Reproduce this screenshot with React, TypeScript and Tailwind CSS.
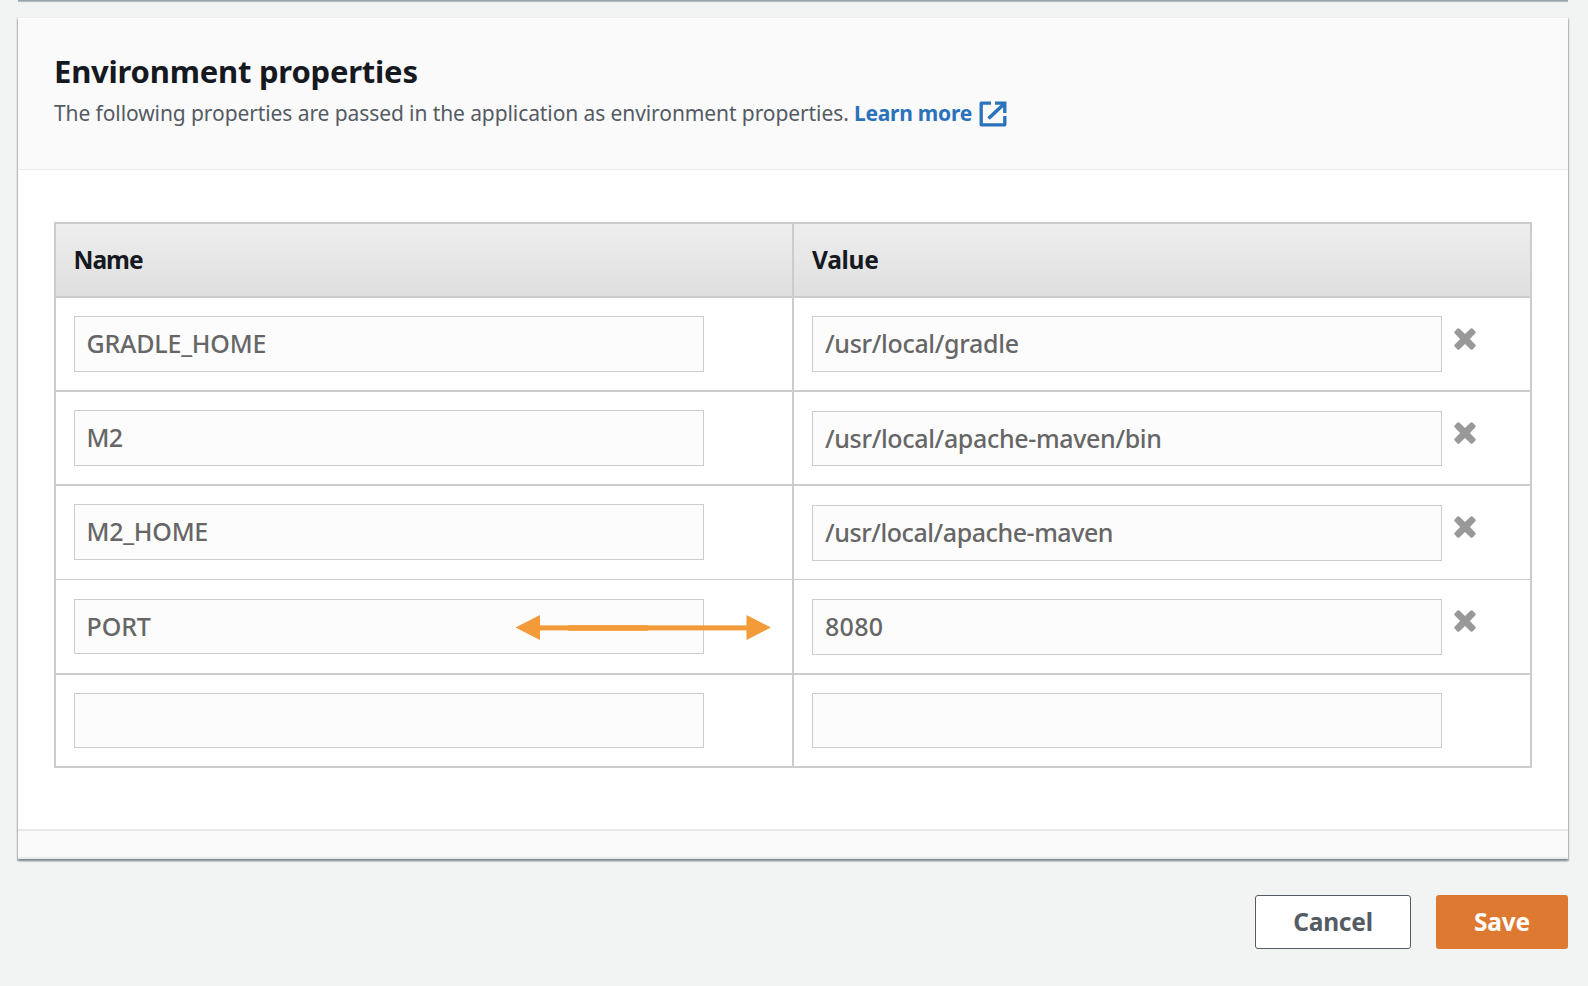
type Row = {
  name: string;
  value: string;
  removable: boolean;
  arrow?: boolean;
  rowClass: string;
  cellClass: string;
  nameClass: string;
  valueClass: string;
  buttonClass: string;
};

const rows: Row[] = [
  {
    name: "GRADLE_HOME",
    value: "/usr/local/gradle",
    removable: true,
    rowClass: "h-[94px] border-b-2",
    cellClass: "pt-[18px]",
    nameClass: "h-14 pl-[11.5px] tracking-[-0.2px]",
    valueClass: "h-14 pl-3 tracking-[-0.32px]",
    buttonClass: "mt-3",
  },
  {
    name: "M2",
    value: "/usr/local/apache-maven/bin",
    removable: true,
    rowClass: "h-[94px] border-b-2",
    cellClass: "pt-[18px]",
    nameClass: "h-14 pl-[11.5px] tracking-[-0.8px]",
    valueClass: "mt-px h-[55px] pt-px pl-3 tracking-[-0.34px]",
    buttonClass: "mt-3",
  },
  {
    name: "M2_HOME",
    value: "/usr/local/apache-maven",
    removable: true,
    rowClass: "h-[94px] border-b",
    cellClass: "pt-[18px]",
    nameClass: "h-14 pl-[11.5px] tracking-[-0.25px]",
    valueClass: "mt-px h-14 pl-3 tracking-[-0.44px]",
    buttonClass: "mt-3",
  },
  {
    name: "PORT",
    value: "8080",
    removable: true,
    arrow: true,
    rowClass: "h-[95px] border-b-2",
    cellClass: "pt-[19px]",
    nameClass: "h-[55px] pt-px pl-[11.5px] tracking-[-0.1px]",
    valueClass: "h-14 pl-3 tracking-[0.3px]",
    buttonClass: "mt-[11px]",
  },
  {
    name: "",
    value: "",
    removable: false,
    rowClass: "h-[91px]",
    cellClass: "pt-[18px]",
    nameClass: "h-[55px]",
    valueClass: "h-[55px]",
    buttonClass: "mt-3",
  },
];

function ExternalLinkIcon() {
  return (
    <svg className="mt-px h-[26px] w-[28px]" viewBox="0 0 28 26" fill="none" stroke="currentColor" strokeWidth="3.3">
      <path d="M12 2.2H2.2V23.8H25.8V15" strokeLinejoin="round" />
      <path d="M16 2.2H25.8V12" />
      <path d="M25 3L9.5 17.5" strokeWidth="3.6" />
    </svg>
  );
}

function RemoveIcon() {
  return (
    <svg className="h-[22px] w-[22px]" viewBox="0 0 22 22">
      <path
        d="M3.2 .8Q4.4 -.3 5.6 .8L11 6.1L16.4 .8Q17.6 -.3 18.8 .8L21.2 3.2Q22.3 4.4 21.2 5.6L15.9 11L21.2 16.4Q22.3 17.6 21.2 18.8L18.8 21.2Q17.6 22.3 16.4 21.2L11 15.9L5.6 21.2Q4.4 22.3 3.2 21.2L.8 18.8Q-.3 17.6 .8 16.4L6.1 11L.8 5.6Q-.3 4.4 .8 3.2Z"
        fill="#999999"
      />
    </svg>
  );
}

function DoubleArrow() {
  return (
    <svg className="absolute left-[458px] top-[33px] h-[28px] w-[258px]" viewBox="0 0 258 28" fill="#f29b38">
      <path d="M1.5 14.5L26 2V27Z" />
      <path d="M257 14.5L232.5 2V27Z" />
      <rect x="25" y="12.4" width="208" height="5" />
      <rect x="54" y="12.2" width="80" height="5.6" />
    </svg>
  );
}

function Field({ text, className }: { text: string; className: string }) {
  return (
    <div
      className={`flex w-[630px] shrink-0 items-center border border-[#cccccc] bg-[#fcfcfc] text-[25px] leading-none font-medium whitespace-nowrap text-[#666666] ${className}`}
    >
      <span className="-mt-0.5">{text}</span>
    </div>
  );
}

export default function App() {
  return (
    <div className="h-[986px] w-[1588px] overflow-hidden bg-[#f2f4f3] pr-5 pl-[18px] font-['Noto_Sans',sans-serif]">
      <div className="h-px bg-[#9aa5ab] shadow-[0_1px_1px_0_rgba(0,28,36,0.3)]" />
      <section className="mt-[17px] bg-white shadow-[0_1px_1px_1px_rgba(0,28,36,0.15),0_2px_2px_0_rgba(0,28,36,0.4)]">
        <header className="h-[152px] border-t border-b border-t-white border-b-[#eaeaea] bg-[#fafafa] px-9 pt-[31px]">
          <h2 className="text-[31px] leading-[42px] font-bold tracking-[-0.22px] text-[#16191f]">
            Environment properties
          </h2>
          <div className="mt-px flex h-10 items-center text-[21px] leading-10 whitespace-nowrap text-[#545b64]">
            <span className="w-[800px] font-[450] tracking-[-0.09px]">
              The following properties are passed in the application as environment properties.
            </span>
            <a className="flex items-center font-bold text-[#2a72bc]">
              <span className="w-[124.5px] tracking-[-0.25px]">Learn more</span>
              <ExternalLinkIcon />
            </a>
          </div>
        </header>

        <div className="px-9 pt-[52px] pb-[61px]">
          <div className="border-2 border-[#cccccc]">
            <div className="grid h-[74px] grid-cols-[738px_738px] border-b-2 border-[#cccccc] bg-linear-to-b from-[#eeeeee] to-[#dfdfdf] text-[24.5px] font-bold text-[#16191f]">
              <div className="flex items-center border-r-2 border-[#cccccc] pl-[17.5px] tracking-[-1px]">Name</div>
              <div className="flex items-center pl-[18px] tracking-[-0.3px]">Value</div>
            </div>
            {rows.map((row, i) => (
              <div key={i} className={`relative grid grid-cols-[738px_738px] border-[#cccccc] ${row.rowClass}`}>
                <div className={`border-r-2 border-[#cccccc] pl-[18px] ${row.cellClass}`}>
                  <Field text={row.name} className={row.nameClass} />
                </div>
                <div className={`flex items-start pl-[18px] ${row.cellClass}`}>
                  <Field text={row.value} className={row.valueClass} />
                  {row.removable && (
                    <button className={`ml-3 ${row.buttonClass}`}>
                      <RemoveIcon />
                    </button>
                  )}
                </div>
                {row.arrow && <DoubleArrow />}
              </div>
            ))}
          </div>
        </div>

        <footer className="h-[30px] border-t-2 border-b-2 border-t-[#e8e8e8] border-b-[#eaeaea] bg-[#fafafa]" />
      </section>

      <div className="mt-9 flex justify-end gap-[25px] text-[24.5px] font-bold tracking-[-0.2px]">
        <button className="h-[54px] w-[156px] rounded-[3px] border border-[#545b64] bg-white text-[#545b64]">
          Cancel
        </button>
        <button className="h-[54px] w-[132px] rounded-[3px] bg-[#dd7931] text-white">Save</button>
      </div>
    </div>
  );
}
